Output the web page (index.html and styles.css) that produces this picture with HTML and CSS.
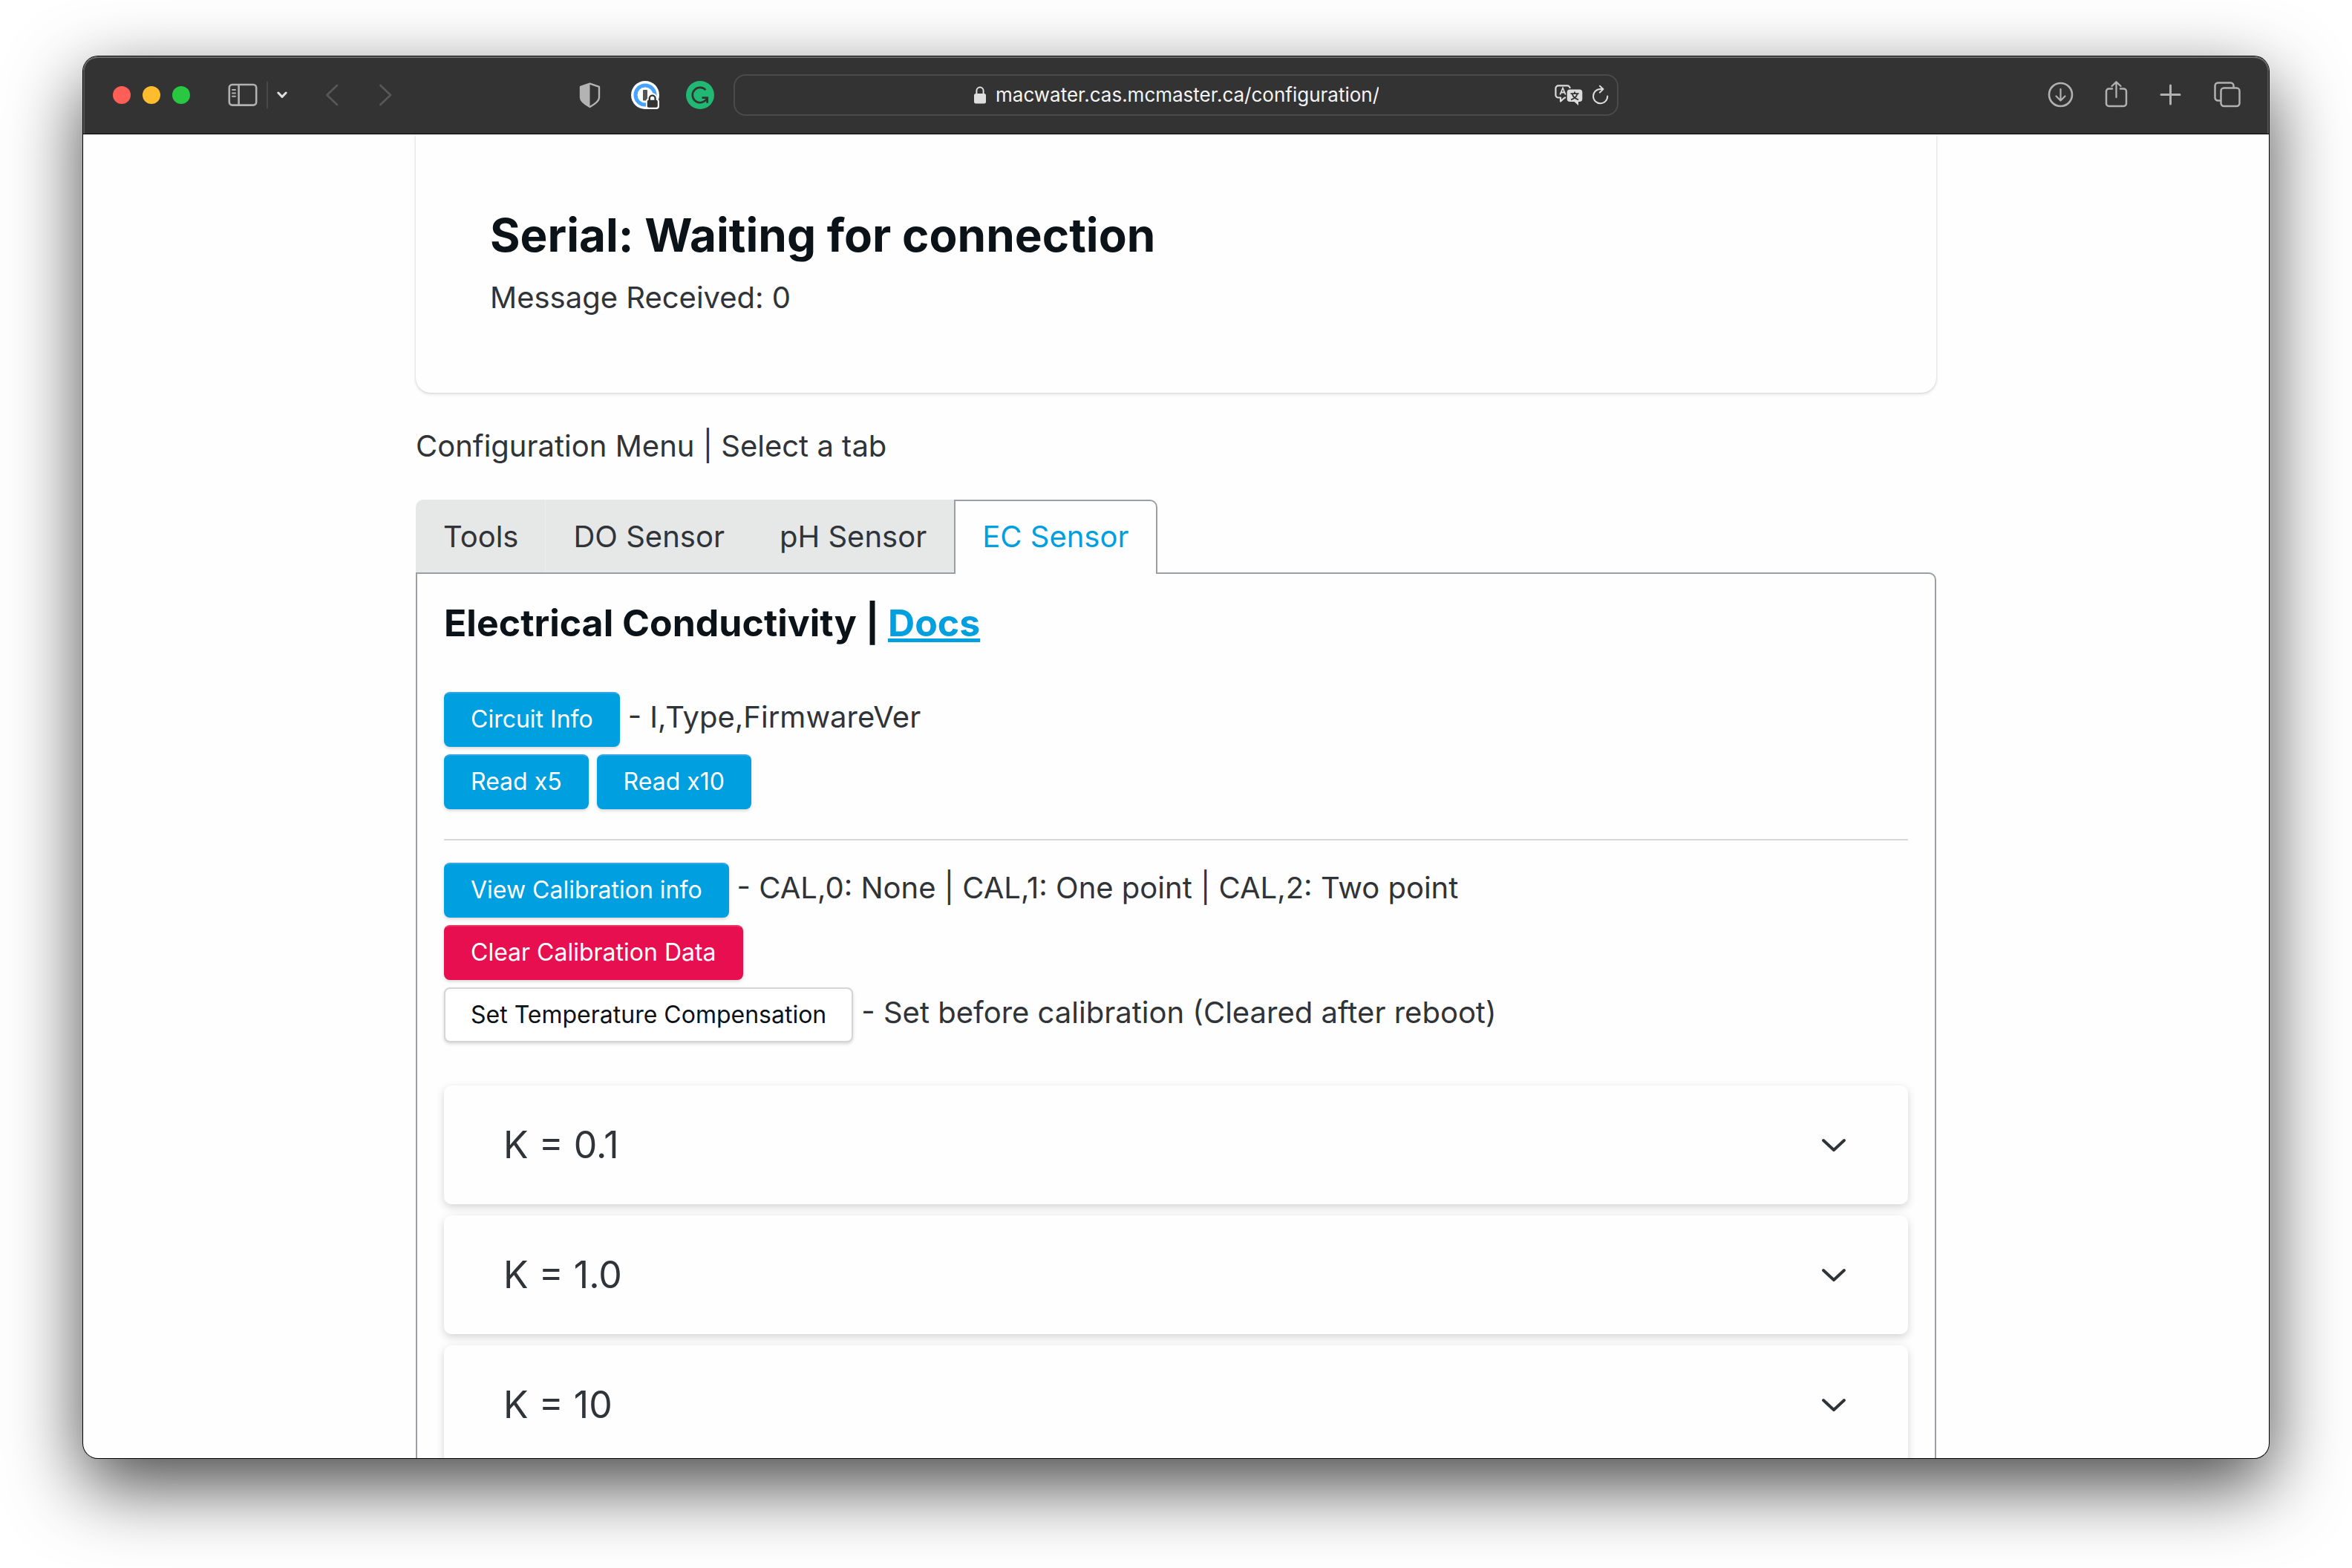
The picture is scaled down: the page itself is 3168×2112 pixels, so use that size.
FILE: index.html
```html
<!DOCTYPE html>
<html lang="en">
<head>
<meta charset="utf-8">
<meta name="viewport" content="width=device-width, initial-scale=1">
<title>Configuration</title>
<link rel="stylesheet" href="styles.css">
</head>
<body>
<div class="window">
  <header class="toolbar">
    <div class="toolbar-left">
      <div class="lights">
        <button class="light light-close" aria-label="Close"></button>
        <button class="light light-min" aria-label="Minimise"></button>
        <button class="light light-max" aria-label="Zoom"></button>
      </div>
      <div class="sidebar-group">
        <button class="icon-btn" aria-label="Sidebar"><svg width="40" height="32" viewBox="0 0 40 32" fill="none" stroke="#b1b1b1" stroke-width="2.6"><rect x="1.8" y="2" width="36.4" height="27.6" rx="4"/><path d="M14.6 2v27.6"/><path d="M6 9h4M6 13.4h4M6 17.8h4" stroke-width="2" stroke-linecap="round"/></svg></button>
        <span class="divider"></span>
        <button class="icon-btn" aria-label="Tab groups"><svg width="14" height="12" viewBox="0 0 14 12" fill="none" stroke="#dedede" stroke-width="3" stroke-linecap="round" stroke-linejoin="round"><path d="M1.8 3l5.2 5.4L12.2 3"/></svg></button>
      </div>
      <div class="history">
        <button class="icon-btn" aria-label="Back"><svg width="18" height="30" viewBox="0 0 18 30" fill="none" stroke="#585858" stroke-width="2.6" stroke-linecap="round" stroke-linejoin="round"><path d="M16 2L2.4 15 16 28"/></svg></button>
        <button class="icon-btn" aria-label="Forward"><svg width="18" height="30" viewBox="0 0 18 30" fill="none" stroke="#585858" stroke-width="2.6" stroke-linecap="round" stroke-linejoin="round"><path d="M2.4 2L16 15 2.4 28"/></svg></button>
      </div>
      <div class="extensions">
        <button class="icon-btn" aria-label="Privacy report"><svg width="38" height="38" viewBox="0 0 38 38"><path d="M18.5 3.6L31 7.8v14.4c0 5-6.4 9.4-12.5 12.8C12.400 31.600 6 27.200 6 22.200V7.800z" fill="none" stroke="#b3b3b3" stroke-width="2.4" stroke-linejoin="round"/><path d="M18.500 3.600v31.400C12.400 31.600 6 27.200 6 22.200V7.800z" fill="#b3b3b3"/></svg></button>
        <button class="icon-btn" aria-label="Passwords"><svg width="38" height="38" viewBox="0 0 38 38"><circle cx="19" cy="19" r="19" fill="#fff"/><circle cx="19" cy="19" r="13" fill="none" stroke="#48a3ff" stroke-width="5"/><rect x="16" y="12" width="6" height="14.500" rx="1" fill="#555"/><path d="M20 27.500c0-2 .7-3 2-3.800 0-5 2.800-7.400 6.400-7.400s6.400 2.400 6.400 7.400c2 .8 3.200 2 3.200 4V34a4 4 0 0 1-4 4H20z" fill="#fff"/><rect x="21.800" y="25.800" width="14" height="10" rx="2" fill="#333"/><path d="M24.800 26.500v-3a3.900 3.900 0 0 1 7.800 0v3" fill="none" stroke="#333" stroke-width="2.400"/></svg></button>
        <button class="icon-btn" aria-label="Grammar"><svg width="38" height="38" viewBox="0 0 38 38"><circle cx="19" cy="19" r="19" fill="#20b873"/><path d="M26.500 12.200A10.200 10.200 0 1 0 26.300 26.200L28.300 23.400" fill="none" stroke="#333" stroke-width="2.600"/><path d="M21.500 22.600h7.200v7.200" fill="none" stroke="#333" stroke-width="2.800"/></svg></button>
      </div>
    </div>
    <div class="address">
      <span class="address-side"></span>
      <label class="address-main">
        <svg width="18" height="26" viewBox="0 0 18 26" aria-hidden="true"><rect x="1" y="11" width="16" height="13.500" rx="2.500" fill="#dfdfdf"/><path d="M4.400 12V7.200a4.600 4.600 0 0 1 9.200 0V12" fill="none" stroke="#dfdfdf" stroke-width="2"/></svg>
        <input class="url" type="text" aria-label="Address" value="macwater.cas.mcmaster.ca/configuration/">
      </label>
      <span class="address-side address-actions">
        <button class="icon-btn" aria-label="Translate"><svg width="38" height="30" viewBox="0 0 38 30"><path d="M15 18.500h-1.500L8 23.500v-5H5a3.600 3.600 0 0 1-3.600-3.600V6A3.600 3.600 0 0 1 5 2.400h12A3.600 3.600 0 0 1 20.600 6" fill="none" stroke="#dcdcdc" stroke-width="2.200" stroke-linejoin="round"/><path d="M7.300 14.500L11 5.500l3.700 9M8.600 11.500h4.800" fill="none" stroke="#dcdcdc" stroke-width="1.800"/><path d="M20.500 7.500h13A3.800 3.800 0 0 1 37.300 11.300v8.900a3.800 3.800 0 0 1-3.800 3.800H32v5l-5.500-5h-6a3.800 3.800 0 0 1-3.800-3.800v-8.900a3.800 3.800 0 0 1 3.800-3.800z" fill="#dcdcdc"/><path d="M21.500 13.200h11M27 10.500v2.700M30.500 13.500c-1 3.500-4 6.500-8.500 7.800M23.700 13.500c1 3.500 4 6.500 8.300 7.800" fill="none" stroke="#333" stroke-width="1.800"/></svg></button>
        <button class="icon-btn" aria-label="Reload"><svg width="24" height="28" viewBox="0 0 24 28" fill="none" stroke="#dcdcdc" stroke-width="2" stroke-linecap="round" stroke-linejoin="round"><path d="M21.200 15.500A9.600 9.600 0 1 1 11.600 6h3"/><path d="M10.800 1.800L15.400 6l-4.600 4.600"/></svg></button>
      </span>
    </div>
    <div class="toolbar-right">
      <button class="icon-btn" aria-label="Downloads"><svg width="36" height="38" viewBox="0 0 36 38" fill="none" stroke="#b1b1b1" stroke-width="2.600" stroke-linecap="round" stroke-linejoin="round"><circle cx="18.500" cy="18.500" r="15.500"/><path d="M18.500 11v15M12.500 20.500l6 6 6-6" stroke-width="2.200"/></svg></button>
      <button class="icon-btn" aria-label="Share"><svg width="36" height="38" viewBox="0 0 36 38" fill="none" stroke="#b1b1b1" stroke-width="2.500" stroke-linecap="round" stroke-linejoin="round"><path d="M13 10.500H8.500A3.500 3.500 0 0 0 5 14v16.500A3.500 3.500 0 0 0 8.500 34h20a3.500 3.500 0 0 0 3.500-3.500V14a3.500 3.500 0 0 0-3.500-3.500H24"/><path d="M18.500 22V1.500M12.500 7l6-5.700 6 5.700" stroke-width="2.300"/></svg></button>
      <button class="icon-btn" aria-label="New tab"><svg width="36" height="38" viewBox="0 0 36 38" fill="none" stroke="#b1b1b1" stroke-width="3" stroke-linecap="round"><path d="M16.500 6v25M4 18.500h25"/></svg></button>
      <button class="icon-btn" aria-label="Tab overview"><svg width="36" height="38" viewBox="0 0 36 38" fill="none" stroke="#b1b1b1" stroke-width="2.500"><rect x="9.500" y="9.500" width="25" height="24.500" rx="4"/><path d="M9.500 26.500H5.500a4 4 0 0 1-4-4V6.500a4 4 0 0 1 4-4h17a4 4 0 0 1 4 4v3"/></svg></button>
    </div>
  </header>

  <main class="page">
    <div class="container">
      <section class="card">
        <h1 class="card-title">Serial: Waiting for connection</h1>
        <p class="card-text">Message Received: 0</p>
      </section>
      <p class="menu-label">Configuration Menu | Select a tab</p>
      <div class="tabs" role="tablist">
        <button class="tab" role="tab">Tools</button>
        <button class="tab" role="tab">DO Sensor</button>
        <button class="tab" role="tab">pH Sensor</button>
        <button class="tab tab-active" role="tab" aria-selected="true">EC Sensor</button>
      </div>
      <section class="panel" role="tabpanel">
        <h2 class="panel-title">Electrical Conductivity | <a href="#docs">Docs</a></h2>
        <div class="rows">
          <div class="row"><button class="btn btn-primary">Circuit Info</button><span>- I,Type,FirmwareVer</span></div>
          <div class="row"><button class="btn btn-primary">Read x5</button><button class="btn btn-primary">Read x10</button></div>
        </div>
        <hr class="rule">
        <div class="rows">
          <div class="row"><button class="btn btn-primary">View Calibration info</button><span>- CAL,0: None | CAL,1: One point | CAL,2: Two point</span></div>
          <div class="row"><button class="btn btn-danger">Clear Calibration Data</button></div>
          <div class="row"><button class="btn btn-plain">Set Temperature Compensation</button><span>- Set before calibration (Cleared after reboot)</span></div>
        </div>
        <div class="accordion">
          <details class="item"><summary>K = 0.1<svg class="chevron" viewBox="0 0 36 22"><path d="M4 5l14 13L32 5"/></svg></summary></details>
          <details class="item"><summary>K = 1.0<svg class="chevron" viewBox="0 0 36 22"><path d="M4 5l14 13L32 5"/></svg></summary></details>
          <details class="item"><summary>K = 10<svg class="chevron" viewBox="0 0 36 22"><path d="M4 5l14 13L32 5"/></svg></summary></details>
        </div>
      </section>
    </div>
  </main>
</div>
</body>
</html>
```
FILE: styles.css
```css
* { box-sizing: border-box; }

body {
  margin: 0;
  height: 100vh;
  padding: 76px 112px 148px;
  overflow: hidden;
  background: #fff;
  color: #303438;
  font-family: Inter, "Liberation Sans", sans-serif;
  font-size: 40px;
  line-height: 60px;
}

h1, h2, p { margin: 0; }
button, input { font: inherit; color: inherit; }

.window {
  display: flex;
  flex-direction: column;
  height: 100%;
  overflow: hidden;
  border-radius: 20px;
  background: #fefefe;
  box-shadow: 0 0 0 1px #000, 0 36px 100px rgba(0, 0, 0, 0.73);
}

/* Browser toolbar */
.toolbar {
  display: grid;
  grid-template-columns: minmax(0, 1fr) minmax(0, 1192px) minmax(0, 1fr);
  align-items: center;
  flex: none;
  height: 105px;
  border-bottom: 1px solid #000;
  border-radius: 20px 20px 0 0;
  background: #333;
  box-shadow: inset 0 2px 0 #6c6c6c, inset 2px 0 0 #555, inset -2px 0 0 #555;
}

.toolbar-left {
  display: flex;
  align-items: center;
  padding: 0 26px 0 40px;
}

.lights { display: flex; gap: 16px; }

.light {
  width: 24px;
  height: 24px;
  padding: 0;
  border: 0;
  border-radius: 50%;
}
.light-close { background: #ff5f57; }
.light-min { background: #febc2e; }
.light-max { background: #28c840; }

.icon-btn {
  display: flex;
  padding: 0;
  border: 0;
  background: none;
}

.sidebar-group {
  display: flex;
  align-items: center;
  gap: 12px;
  margin-left: 51px;
}
.divider { width: 2px; height: 36px; background: #484848; }

.history { display: flex; gap: 54px; margin-left: 51px; }
.extensions { display: flex; gap: 36px; margin-left: auto; }

.address {
  display: flex;
  align-items: center;
  height: 56px;
  padding: 0 10px;
  border: 2px solid #4b4b4b;
  border-radius: 16px;
}
.address-side { flex: 1; }
.address-actions { display: flex; justify-content: flex-end; align-items: center; gap: 12px; }
.address-main { display: flex; align-items: center; gap: 12px; }

.url {
  width: 516px;
  height: 40px;
  padding: 0;
  border: 0;
  outline: 0;
  background: none;
  color: #f4f4f4;
  font-size: 26px;
  line-height: 40px;
}

.toolbar-right {
  display: flex;
  justify-content: flex-end;
  align-items: center;
  gap: 39px;
  padding-right: 38px;
}

/* Page */
.page { flex: 1; min-height: 0; overflow: hidden; }
.container { max-width: 2048px; margin: 0 auto; }

.card {
  padding: 98px 100px;
  border-radius: 0 0 20px 20px;
  box-shadow: 0 0 2px rgba(0, 0, 0, 0.16), 0 2px 4px rgba(0, 0, 0, 0.12);
}
.card-title {
  margin-bottom: 16px;
  color: #0b1318;
  font-size: 62px;
  line-height: 76px;
}

.menu-label { margin: 42px 0; }

/* The active tab reaches 2px lower than the others and covers the panel's top border */
.tabs { display: flex; align-items: flex-start; position: relative; margin-bottom: -2px; }
.tab {
  padding: 20px 37px 18px;
  border: 0;
  background: #e5e8e7;
}
.tab:first-child {
  padding-right: 36px;
  border-top-left-radius: 10px;
  border-right: 1px solid #eceeed;
}
.tab-active {
  padding: 18px 36px 20px;
  border: 2px solid #9b9fa3;
  border-bottom: 0;
  border-radius: 0 10px 0 0;
  background: #fefefe;
  color: #009fe0;
}

.panel {
  padding: 36px;
  border: 2px solid #9b9fa3;
  border-radius: 0 10px 10px 10px;
}
.panel-title {
  margin-bottom: 63px;
  color: #0b1318;
  font-size: 50px;
  line-height: 60px;
}
.panel-title a { color: #009fe0; }

.rows { display: flex; flex-direction: column; gap: 10px; }
.row { display: flex; align-items: baseline; gap: 11px; }

.btn {
  height: 74px;
  padding: 0 34px;
  border: 2px solid;
  border-radius: 8px;
  font-size: 32px;
  line-height: 70px;
  box-shadow: 0 2px 4px rgba(0, 0, 0, 0.16);
}
.btn-primary { border-color: #36a7e4 #009fe0 #009fe0; background: #009fe0; color: #fff; }
.btn-danger { border-color: #ec3560 #e80f50 #e80f50; background: #e80f50; color: #fff; }
.btn-plain { border-color: #d3d5d6; background: #fff; color: #0b1318; }

.rule {
  height: 2px;
  margin: 40px 0 30px;
  border: 0;
  background: #d6d8d9;
}

.accordion { display: flex; flex-direction: column; gap: 15px; margin-top: 58px; }
.item {
  border-radius: 10px;
  background: #fefefe;
  box-shadow: 0 4px 12px rgba(0, 0, 0, 0.17);
}
.item summary {
  display: flex;
  justify-content: space-between;
  align-items: center;
  padding: 50px 82px 50px 80px;
  font-size: 50px;
  line-height: 60px;
  list-style: none;
}
.chevron {
  width: 36px;
  height: 22px;
  fill: none;
  stroke: #303438;
  stroke-width: 4;
  stroke-linecap: round;
  stroke-linejoin: round;
}
```
